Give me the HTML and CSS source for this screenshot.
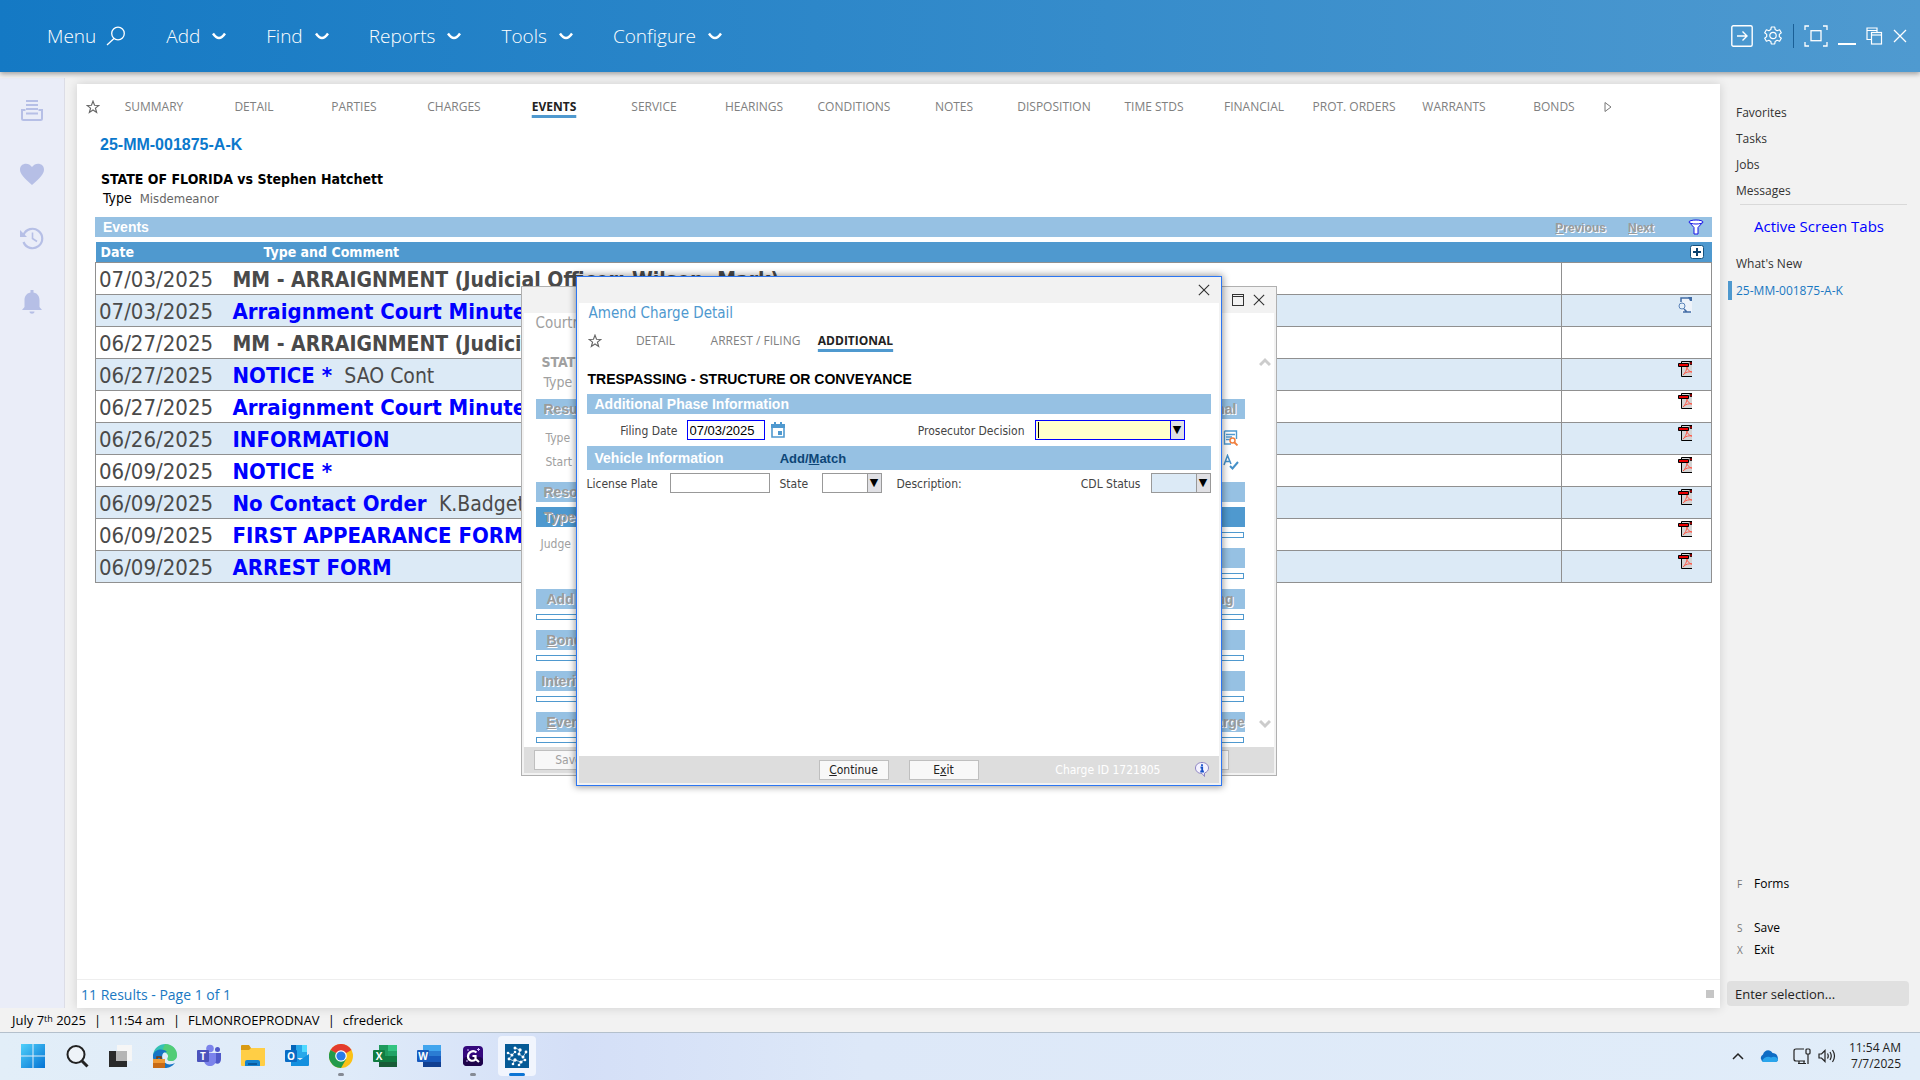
FILE: index.html
```html
<!DOCTYPE html>
<html lang="en">
<head>
    <meta charset="UTF-8">
    <meta name="viewport" content="width=device-width, initial-scale=1.0">
    <title>25-MM-001875-A-K</title>
    <link rel="stylesheet" href="styles.css">
</head>
<body>
    <!-- shared icons -->
    <svg class="defs" width="0" height="0">
        <symbol id="chevron" viewBox="0 0 14 9"><path d="M1 1.500q3 4.500 6 4.500t6-4.500" fill="none" stroke="currentColor" stroke-width="2.400"/></symbol>
        <symbol id="star" viewBox="0 0 12 12"><path d="M6 1l1.300 3.500 3.700.2-2.900 2.300 1 3.700L6 8.600l-3.100 2.100 1-3.700L1 4.700l3.700-.2z" fill="none" stroke="#666" stroke-width="1"/></symbol>
        <symbol id="close" viewBox="0 0 14 14"><path d="M1 1l12 12M13 1L1 13" fill="none" stroke="currentColor" stroke-width="1.3"/></symbol>
        <symbol id="pdf" viewBox="0 0 14 16">
            <path d="M3.500 15.500V.5H12l2 2v13z" fill="#d4d4d4"/>
            <path d="M14 15.500H3.500V.5H14" fill="none" stroke="#000"/>
            <path d="M12 1h2v2.500h-2z" fill="#e00" stroke="#000" stroke-width=".7"/>
            <path d="M5 14c2-1.500 4-5.500 4-8.500 0 3 2 5 5 5.500-3-.6-6 .2-8 2" fill="none" stroke="#ff5a4a"/>
            <path d="M.5 2.500h10v3H.5z" fill="#e80000" stroke="#000"/>
        </symbol>
        <symbol id="doc" viewBox="0 0 14 16">
            <path d="M3.500 15.500V.7H11l3 3v11.800z" fill="#eef3fa"/>
            <path d="M3 5V1h8M5 15h8M6 12l3 3" fill="none" stroke="#426ca5" stroke-width="1.500"/>
            <path d="M10 0h4v4h-2z" fill="#426ca5"/>
            <circle cx="4" cy="9" r="3" fill="#e6f0fa" stroke="#5b83b8"/>
        </symbol>
    </svg>

    <header class="topbar">
        <nav>
            <button class="menu-search">Menu
                <svg width="20" height="20" viewBox="0 0 20 20"><circle cx="12" cy="7.500" r="6.300" fill="none" stroke="#fff" stroke-width="1.300"/><path d="M8 12.500L1 19" stroke="#fff" stroke-width="1.300"/></svg>
            </button>
            <button>Add <svg width="14" height="9"><use href="#chevron"/></svg></button>
            <button>Find <svg width="14" height="9"><use href="#chevron"/></svg></button>
            <button>Reports <svg width="14" height="9"><use href="#chevron"/></svg></button>
            <button>Tools <svg width="14" height="9"><use href="#chevron"/></svg></button>
            <button>Configure <svg width="14" height="9"><use href="#chevron"/></svg></button>
        </nav>
        <div class="window-icons">
            <button aria-label="Open"><svg width="22" height="22" viewBox="0 0 22 22" fill="none" stroke="#fff" stroke-width="1.400"><rect x=".8" y=".8" width="20.400" height="20.400" rx="1.500"/><path d="M6 11h9.500M11.500 6.500L16 11l-4.500 4.500"/></svg></button>
            <button aria-label="Settings"><svg width="20" height="20" viewBox="0 0 20 20" fill="none" stroke="#fff" stroke-width="1.200"><path d="M8.300 1h3.400l.5 2.600 1.900 1.100 2.500-.9 1.700 2.900-2 1.700v2.200l2 1.700-1.700 2.900-2.500-.9-1.900 1.100-.5 2.600H8.300l-.5-2.600-1.900-1.100-2.500.9-1.700-2.900 2-1.700V8.400l-2-1.700 1.700-2.900 2.500.9 1.900-1.100z" stroke-linejoin="round"/><circle cx="10" cy="9.500" r="3.200"/></svg></button>
            <span class="divider"></span>
            <button aria-label="Full screen"><svg width="24" height="22" viewBox="0 0 24 22" fill="none" stroke="#fff" stroke-width="1.300"><path d="M1 5V1h4M19 1h4v4M23 17v4h-4M5 21H1v-4"/><rect x="7" y="5.700" width="10" height="10"/></svg></button>
            <button aria-label="Minimize"><svg width="18" height="18" viewBox="0 0 18 18"><path d="M0 17h18" stroke="#fff" stroke-width="2"/></svg></button>
            <button aria-label="Restore"><svg width="17" height="18" viewBox="0 0 17 18" fill="none" stroke="#fff" stroke-width="1.200"><path d="M5 12.500H1V1h10v4M1 3.500h10"/><rect x="5.500" y="5.500" width="10" height="11.500"/><path d="M5.500 8h10"/></svg></button>
            <button aria-label="Close"><svg width="14" height="14"><use href="#close"/></svg></button>
        </div>
    </header>

    <div class="workspace">
        <aside class="rail">
            <button aria-label="Print"><svg width="24" height="24" viewBox="0 0 24 24" fill="none" stroke="#b6bfe6" stroke-width="2"><path d="M6 3h12M6 7h12M6 11h12M6 15.500h12"/><path d="M5.500 12H2v8.500q0 1.500 1.500 1.500h17q1.500 0 1.500-1.500V12h-3.500"/></svg></button>
            <button aria-label="Favorites"><svg width="24" height="24" viewBox="0 0 24 24"><path d="M12 23C4 16 0 12 0 7.500 0 1 8.500-.5 12 5c3.500-5.500 12-4 12 2.500C24 12 20 16 12 23z" fill="#b6bfe6"/></svg></button>
            <button aria-label="History"><svg width="24" height="24" viewBox="0 0 24 24" fill="none" stroke="#b6bfe6" stroke-width="2.200"><path d="M3.500 9a9.700 9.700 0 1 1 0 7"/><path d="M12.500 6.500v6l4.500 3" stroke-width="1.600"/><path d="M0 4v7h7z" fill="#b6bfe6" stroke="none"/></svg></button>
            <button aria-label="Alerts"><svg width="24" height="24" viewBox="0 0 24 24" fill="#b6bfe6"><path d="M10.500 0h3v2.500c4.500 1 6 4 6 8V17l2.500 3H2l2.500-3v-6.500c0-4 1.500-7 6-8z"/><path d="M9.500 21.500h5c0 3-5 3-5 0z"/></svg></button>
        </aside>

        <main class="panel">
            <nav class="tabs">
                <svg class="star" width="14" height="14"><use href="#star"/></svg>
                <a href="#">SUMMARY</a>
                <a href="#">DETAIL</a>
                <a href="#">PARTIES</a>
                <a href="#">CHARGES</a>
                <a href="#" class="active">EVENTS</a>
                <a href="#">SERVICE</a>
                <a href="#">HEARINGS</a>
                <a href="#">CONDITIONS</a>
                <a href="#">NOTES</a>
                <a href="#">DISPOSITION</a>
                <a href="#">TIME STDS</a>
                <a href="#">FINANCIAL</a>
                <a href="#">PROT. ORDERS</a>
                <a href="#">WARRANTS</a>
                <a href="#">BONDS</a>
                <svg width="8" height="12" viewBox="0 0 8 12"><path d="M1 1.500v9L7 6z" fill="none" stroke="#777"/></svg>
            </nav>

            <section class="case">
                <h1>25-MM-001875-A-K</h1>
                <h2>STATE OF FLORIDA vs Stephen Hatchett</h2>
                <p>Type <span>Misdemeanor</span></p>
            </section>

            <section class="events">
                <div class="bar">
                    <h3>Events</h3>
                    <button class="emboss pager" disabled><u>P</u>revious</button>
                    <button class="emboss pager" disabled><u>N</u>ext</button>
                    <svg width="16" height="16" viewBox="0 0 16 16" fill="#fff" stroke="#1414e6"><path d="M1 3l5 5.500V15h4V8.500L15 3z"/><ellipse cx="8" cy="3" rx="7" ry="2"/></svg>
                </div>
                <table>
                    <thead>
                        <tr>
                            <th class="date">Date</th>
                            <th class="type">Type and Comment</th>
                            <th class="file"><svg width="14" height="14" viewBox="0 0 14 14"><rect x=".5" y=".5" width="13" height="13" rx="2" fill="#fff" stroke="#15527f"/><path d="M7 3v8M3 7h8" stroke="#0b416e" stroke-width="2"/></svg></th>
                        </tr>
                    </thead>
                    <tbody>
                        <tr><td>07/03/2025</td><td><b>MM - ARRAIGNMENT (Judicial Officer: Wilson, Mark)</b></td><td></td></tr>
                        <tr><td>07/03/2025</td><td><a href="#">Arraignment Court Minutes</a></td><td><svg width="14" height="16"><use href="#doc"/></svg></td></tr>
                        <tr><td>06/27/2025</td><td><b>MM - ARRAIGNMENT (Judicial Officer: Wilson, Mark)</b></td><td></td></tr>
                        <tr><td>06/27/2025</td><td><a href="#">NOTICE *</a> <span>SAO Cont</span></td><td><svg width="14" height="16"><use href="#pdf"/></svg></td></tr>
                        <tr><td>06/27/2025</td><td><a href="#">Arraignment Court Minutes</a></td><td><svg width="14" height="16"><use href="#pdf"/></svg></td></tr>
                        <tr><td>06/26/2025</td><td><a href="#">INFORMATION</a></td><td><svg width="14" height="16"><use href="#pdf"/></svg></td></tr>
                        <tr><td>06/09/2025</td><td><a href="#">NOTICE *</a></td><td><svg width="14" height="16"><use href="#pdf"/></svg></td></tr>
                        <tr><td>06/09/2025</td><td><a href="#">No Contact Order</a> <span>K.Badgett</span></td><td><svg width="14" height="16"><use href="#pdf"/></svg></td></tr>
                        <tr><td>06/09/2025</td><td><a href="#">FIRST APPEARANCE FORM</a></td><td><svg width="14" height="16"><use href="#pdf"/></svg></td></tr>
                        <tr><td>06/09/2025</td><td><a href="#">ARREST FORM</a></td><td><svg width="14" height="16"><use href="#pdf"/></svg></td></tr>
                    </tbody>
                </table>
            </section>

            <footer class="results">
                <span>11 Results - Page 1 of 1</span>
                <i></i>
            </footer>

            <!-- court session window, disabled while the charge window is open -->
            <div class="window back">
                <div class="titlebar">
                    <svg width="12" height="12" viewBox="0 0 12 12" fill="none" stroke="#333"><rect x=".5" y=".5" width="11" height="11"/><path d="M0 2.500h12"/></svg>
                    <svg width="12" height="12"><use href="#close"/></svg>
                </div>
                <div class="back-body">
                    <div class="back-form">
                        <p class="back-title">Courtroom</p>
                        <p class="back-party"><b>STATE</b></p>
                        <p class="back-type">Type</p>
                        <div class="bar"><span class="emboss">Result</span><span class="emboss">Additional</span></div>
                        <div class="back-fields">
                            <div class="field"><span>Type</span><svg width="16" height="16" viewBox="0 0 16 16" fill="none"><path d="M1.500 1h12v8M1.500 1v13H8M3 4.500h9M3 7h6M3 9.500h4" stroke="#4f99cf" stroke-width="1.400"/><circle cx="9.500" cy="10.500" r="2.500" stroke="#f08040" stroke-width="1.500"/><path d="M11.500 12.500l3 3" stroke="#f08040" stroke-width="1.800"/></svg></div>
                            <div class="field"><span>Start</span><svg width="16" height="16" viewBox="0 0 16 16" fill="none" stroke="#4590c8" stroke-width="1.500"><path d="M1 11L4.500 1.500 8 10M2.500 7.500h4.500"/><path d="M7 12l2.500 2.500L15 8" stroke-width="2"/></svg></div>
                        </div>
                        <div class="bar"><span class="emboss">Resources</span></div>
                        <div class="bar dark"><span class="emboss">Type</span></div>
                        <div class="judge">
                            <p>Judge</p>
                            <div class="judge-lists">
                                <div class="slot"></div>
                                <div class="bar"></div>
                                <div class="slot"></div>
                            </div>
                        </div>
                        <div class="bar group"><span class="emboss">Add</span><span class="emboss">Hearing</span></div>
                        <div class="slot"></div>
                        <div class="bar group"><span class="emboss"><u>B</u>onds</span></div>
                        <div class="slot"></div>
                        <div class="bar group tight"><span class="emboss">Interim</span></div>
                        <div class="slot"></div>
                        <div class="bar group clip"><span class="emboss"><u>E</u>vents</span><span class="emboss">Char<u>g</u>es</span></div>
                        <div class="slot"></div>
                    </div>
                    <div class="scroll">
                        <svg width="12" height="10" viewBox="0 0 12 10"><path d="M1 8l5-5 5 5" fill="none" stroke="#ccc" stroke-width="3"/></svg>
                        <svg width="12" height="10" viewBox="0 0 12 10"><path d="M1 2l5 5 5-5" fill="none" stroke="#ccc" stroke-width="3"/></svg>
                    </div>
                </div>
                <div class="buttons">
                    <button disabled>Save</button>
                    <button disabled>Exit</button>
                </div>
            </div>

            <div class="window front" role="dialog" aria-label="Amend Charge Detail">
                <div class="titlebar">
                    <button aria-label="Close"><svg width="12" height="12"><use href="#close"/></svg></button>
                </div>
                <div class="front-body">
                    <h4>Amend Charge Detail</h4>
                    <nav class="tabs">
                        <svg class="star" width="14" height="14"><use href="#star"/></svg>
                        <a href="#">DETAIL</a>
                        <a href="#">ARREST / FILING</a>
                        <a href="#" class="active">ADDITIONAL</a>
                    </nav>
                    <h5>TRESPASSING - STRUCTURE OR CONVEYANCE</h5>
                    <div class="bar"><h3>Additional Phase Information</h3></div>
                    <div class="form-row phase">
                        <label class="filing" for="filing">Filing Date</label>
                        <input id="filing" class="filing-date" type="text" value="07/03/2025">
                        <svg width="14" height="16" viewBox="0 0 14 16"><path d="M1 3h12v12H1z" fill="none" stroke="#4f99cf" stroke-width="1.600"/><path d="M0 2h14v4H0zM3 0h2v3H3zM9 0h2v3H9zM7 9h4v4H7z" fill="#4f99cf"/></svg>
                        <label class="push" for="decision">Prosecutor Decision</label>
                        <div class="combo focus"><i class="caret"></i><select id="decision"><option></option></select><span>▼</span></div>
                    </div>
                    <div class="bar tall"><h3>Vehicle Information</h3><a href="#">Add/<u>M</u>atch</a></div>
                    <div class="form-row">
                        <label class="plate" for="plate">License Plate</label>
                        <input id="plate" class="plate-no" type="text">
                        <label class="state" for="state">State</label>
                        <div class="combo small"><select id="state"><option></option></select><span>▼</span></div>
                        <span class="desc">Description:</span>
                        <label class="push" for="cdl">CDL Status</label>
                        <div class="combo small shaded"><select id="cdl"><option></option></select><span>▼</span></div>
                    </div>
                </div>
                <div class="buttons">
                    <button><u>C</u>ontinue</button>
                    <button>E<u>x</u>it</button>
                    <span>Charge ID 1721805</span>
                    <svg width="14" height="15" viewBox="0 0 14 15"><path d="M7 .5C3 .5.500 3 .500 6S3 11.500 7 11.500l2.500 3V11c2.500-1 4-2.500 4-5C13.500 3 11 .5 7 .5z" fill="#f4f2ff" stroke="#8d85c4"/><path d="M7 2.300v1.800M5.500 5.500H7.200V9.500M5.300 9.500h3.600" stroke="#1550c8" stroke-width="1.800" fill="none"/></svg>
                </div>
            </div>
        </main>

        <aside class="side">
            <a href="#">Favorites</a>
            <a href="#">Tasks</a>
            <a href="#">Jobs</a>
            <a href="#">Messages</a>
            <h6>Active Screen Tabs</h6>
            <a href="#">What's New</a>
            <a href="#" class="current">25-MM-001875-A-K</a>
            <div class="actions">
                <button class="forms"><kbd>F</kbd>Forms</button>
                <button><kbd>S</kbd>Save</button>
                <button><kbd>X</kbd>Exit</button>
            </div>
            <input type="text" placeholder="Enter selection..." aria-label="Selection">
        </aside>
    </div>

    <div class="status">
        <span>July 7<small>th</small> 2025</span><i>|</i><span>11:54 am</span><i>|</i><span>FLMONROEPRODNAV</span><i>|</i><span>cfrederick</span>
    </div>

    <footer class="taskbar">
        <div class="apps">
            <button aria-label="Start"><svg viewBox="0 0 24 24"><defs><linearGradient id="win" x2="1" y2="1"><stop stop-color="#4fd0fa"/><stop offset="1" stop-color="#0573d4"/></linearGradient></defs><path d="M0 0h11.500v11.500H0zM12.500 0H24v11.500H12.500zM0 12.500h11.500V24H0zM12.500 12.500H24V24H12.500z" fill="url(#win)"/></svg></button>
            <button aria-label="Search"><svg viewBox="0 0 24 24" fill="none" stroke="#222"><circle cx="11" cy="10.500" r="8.500" fill="#eef3f8" stroke-width="2"/><path d="M17 17l5.500 5.500" stroke-width="3"/></svg></button>
            <button aria-label="Task view"><svg viewBox="0 0 24 24"><path d="M8 1h15v16H8z" fill="#f6f6f6"/><path d="M0 7h18v16H0z" fill="#2a2a2a"/><path d="M7 7h11v10H7z" fill="#b5b5b5"/></svg></button>
            <button aria-label="Edge"><svg viewBox="0 0 24 24"><path d="M0 11C1 4 6 0 12.500 0 19 0 24 5 24 11c0 4-3 6-6 6-4 0-4-2-3-4 1-4-5-6-8-4-3 1-6 2-7 2z" fill="#35c1b4"/><path d="M12 0c7 0 12 5 12 11 0 4-3 6-6 6-4 0-4-2-3-4 .5-4-3-6-6-6z" fill="#66d64f" opacity=".6"/><path d="M0 11c2-6 10-7 14-3-6-1-7 8 0 12 3 1 6 0 8-1-3 4-7 5-10 5C5 24-1 18 0 11z" fill="#1674c4"/><path d="M0 15h12v9H0z" fill="#c76a15"/><path d="M0 15h12v4H0z" fill="#f09a33"/><path d="M4 15v-2h4v2" stroke="#7c3a09" stroke-width="1.500" fill="none"/></svg></button>
            <button aria-label="Teams"><svg viewBox="0 0 24 24"><circle cx="13" cy="4.500" r="3.800" fill="#7b83eb"/><circle cx="20.500" cy="5.500" r="2.500" fill="#5059c9"/><path d="M17 9h7v6c0 4-3 6-6 4z" fill="#5059c9"/><path d="M7 9h12v7c0 8-12 8-12 0z" fill="#7b83eb"/><rect y="6" width="12" height="12" rx="1" fill="#4b53bc"/><text x="6" y="16" class="glyph">T</text></svg></button>
            <button aria-label="File Explorer"><svg viewBox="0 0 24 24"><path d="M0 2q0-1 1-1h7l2 3h13q1 0 1 1v5H0z" fill="#d99a12"/><path d="M0 6h8l2-2h14v17q0 1-1 1H1q-1 0-1-1z" fill="#ffce45"/><path d="M4 22v-4q0-2 2-2h11q2 0 2 2v4z" fill="#1583cf"/><path d="M7 19h9v2H7z" fill="#0a5a9c"/></svg></button>
            <button aria-label="Outlook"><svg viewBox="0 0 24 24"><path d="M6 1h16v13H6z" fill="#28a8ea"/><path d="M6 1h5v7H6z" fill="#0364b8"/><path d="M17 1h5v7h-5z" fill="#50d9ff"/><path d="M6 22V10l9 6 9-6v11q0 1-1 1z" fill="#1490df"/><rect y="6" width="12" height="12" rx="1" fill="#0a6cc4"/><text x="6" y="16" class="glyph">O</text></svg></button>
            <button aria-label="Chrome" class="open"><svg viewBox="0 0 24 24"><circle cx="12" cy="12" r="12" fill="#fbc116"/><path d="M12 12L1.600 6a12 12 0 0 1 20.800 0z" fill="#e33b2e"/><path d="M12 12L1.600 6A12 12 0 0 0 12 24l5.200-9z" fill="#229a4b"/><circle cx="12" cy="12" r="5.800" fill="#fff"/><circle cx="12" cy="12" r="4.600" fill="#2a7be8"/></svg></button>
            <button aria-label="Excel"><svg viewBox="0 0 24 24"><path d="M6 1h9v22H6z" fill="#1f9a5d"/><path d="M15 1h9v6h-9z" fill="#33c481"/><path d="M15 7h9v6h-9z" fill="#21a366"/><path d="M6 12h9v6H6zM15 12h9v6h-9z" fill="#107c41"/><path d="M6 18h18v5H6z" fill="#185c37"/><rect y="6" width="12" height="12" rx="1" fill="#107c41"/><text x="6" y="16" class="glyph">X</text></svg></button>
            <button aria-label="Word"><svg viewBox="0 0 24 24"><path d="M6 1h18v6H6z" fill="#41a5ee"/><path d="M6 7h18v5H6z" fill="#2b7cd3"/><path d="M6 12h18v6H6z" fill="#185abd"/><path d="M6 18h18v5H6z" fill="#103f91"/><rect y="6" width="12" height="12" rx="1" fill="#185abd"/><text x="6" y="16" class="glyph">W</text></svg></button>
            <button aria-label="Greenshot" class="open"><svg viewBox="0 0 24 24"><rect x="2" y="2" width="20" height="20" rx="4" fill="#34087c"/><rect x="2" y="13" width="20" height="9" rx="4" fill="#1d0349"/><path d="M15.500 8.500C12 5.500 7 8 7 12.500c0 4 4.500 5.500 7.500 3V12H11.500M14.500 15l3.500 3" fill="none" stroke="#fff" stroke-width="2.200"/><path d="M6 6h2M5 17h2M16 5.500h3M17.500 4v3" stroke="#d5b8ff"/></svg></button>
            <button aria-label="Case manager" class="running"><svg viewBox="0 0 24 24"><path d="M0 0h24v24H0z" fill="#055a96"/><path d="M10 4l5 2-1 4 4 3 3-5M20 15l-4 3-6-2M14 21l2-3M3 9l4 2 3-3M7 11l-3 4 5 2-1 4" fill="none" stroke="#fff" stroke-width=".7"/><g fill="#fff"><circle cx="10" cy="4" r="1.500"/><circle cx="15" cy="6" r="1.700"/><circle cx="14" cy="10" r="1.500"/><circle cx="18" cy="13" r="1.500"/><circle cx="21" cy="8" r="1.400"/><circle cx="20" cy="16" r="1.300"/><circle cx="16" cy="18" r="1.600"/><circle cx="14" cy="21" r="1.300"/><circle cx="10" cy="16" r="1.700"/><circle cx="8" cy="20" r="1.300"/><circle cx="4" cy="15" r="1.400"/><circle cx="7" cy="11" r="1.500"/><circle cx="3" cy="9" r="1.300"/><circle cx="10" cy="8" r="1.300"/></g></svg></button>
        </div>
        <div class="tray">
            <svg width="12" height="8" viewBox="0 0 12 8"><path d="M1 7l5-5 5 5" fill="none" stroke="#222" stroke-width="1.500"/></svg>
            <svg class="cloud" width="18" height="12" viewBox="0 0 18 12"><path d="M4 12a4 4 0 0 1-1-7.500C4 0 10-1.500 12.500 3 17 3 18 7 18 9c0 2-1 3-3 3z" fill="#0f6cc4"/><path d="M2 11.500c1-4 6-6 9-4 3-2 7 0 7 2 0 1.500-1 2.500-3 2.500H4z" fill="#2aa5ec"/></svg>
            <svg width="18" height="18" viewBox="0 0 18 18" fill="none" stroke="#222" stroke-width="1.200"><path d="M11 2H3q-2 0-2 2v8q0 2 2 2h9M5 16.500h8M6 14v2M11 14v2"/><rect x="13" y="2" width="4" height="5" rx="1"/><path d="M15 7v10"/></svg>
            <svg width="18" height="18" viewBox="0 0 18 18" fill="none" stroke="#222" stroke-width="1.200"><path d="M1 7h2.500L7 3.500v11L3.500 11H1zM9.500 6.500q1.500 2.500 0 5M12 5q2.500 4 0 8M14.500 3q4 6 0 12"/></svg>
            <div class="clock">11:54 AM<br>7/7/2025</div>
        </div>
    </footer>
</body>
</html>
```

FILE: styles.css
```css
* {
    box-sizing: border-box;
}

body {
    margin: 0;
    min-height: 100vh;
    display: flex;
    flex-direction: column;
    background-color: #f2f2f2;
    font-family: "Open Sans", "Noto Sans", sans-serif;
    font-size: 12px;
    color: #222;
}

h1, h2, h3, h4, h5, h6, p {
    margin: 0;
}

button {
    font-family: inherit;
    background: none;
    border: none;
    padding: 0;
    color: inherit;
}

a {
    color: inherit;
    text-decoration: none;
}

svg {
    display: block;
    flex: none;
}

.defs {
    position: absolute;
}

/* top bar */
.topbar {
    height: 72px;
    padding: 0 13px 0 47px;
    display: flex;
    justify-content: space-between;
    align-items: center;
    background: linear-gradient(to right, #1479c4, #4f9ad0);
    color: #fff;
    box-shadow: 0 2px 5px rgba(0, 0, 0, 0.35);
    z-index: 1;
}

.topbar nav {
    display: flex;
    gap: 40px;
}

.topbar nav button {
    display: flex;
    align-items: center;
    gap: 12px;
    font-size: 19px;
    font-weight: 300;
}

.topbar nav button:first-child {
    gap: 10px;
}

.window-icons {
    display: flex;
    align-items: center;
    gap: 10px;
}

.window-icons .divider {
    width: 1px;
    height: 24px;
    background-color: #1a5f96;
}

/* work area */
.workspace {
    flex: 1;
    display: flex;
}

.rail {
    width: 65px;
    margin-top: 6px;
    padding-top: 20px;
    display: flex;
    flex-direction: column;
    align-items: center;
    gap: 40px;
    background-color: #eaedf8;
    border-right: 1px solid #dcdde6;
}

.panel {
    position: relative;
    flex: 1;
    min-width: 0;
    margin: 12px 0 0 12px;
    display: flex;
    flex-direction: column;
    background-color: #fff;
    box-shadow: 0 0 10px rgba(0, 0, 0, 0.15);
}

.tabs {
    display: flex;
    align-items: center;
    height: 46px;
    padding-left: 9px;
    color: #808080;
}

.tabs .star {
    margin-right: 4px;
}

.tabs a {
    width: 100px;
    text-align: center;
    line-height: 18px;
    white-space: nowrap;
}

.tabs .active {
    color: #222;
    font-weight: bold;
    text-decoration: underline 3px #4f99cf;
    text-underline-offset: 4px;
}

.case {
    padding: 5px 0 0 23px;
    font-family: "DejaVu Sans Condensed", sans-serif;
}

.case h1 {
    font-family: "Liberation Sans", Arial, sans-serif;
    font-size: 16px;
    line-height: 20px;
    color: #0b78cc;
}

.case h2 {
    margin-top: 14px;
    padding-left: 1px;
    font-size: 14px;
    line-height: 20px;
    color: #000;
}

.case p {
    padding-left: 3px;
    font-size: 14px;
    line-height: 18px;
    color: #000;
}

.case p span {
    margin-left: 4px;
    font-size: 13px;
    color: #666;
}

.events {
    padding: 9px 8px 0 18px;
}

.bar {
    display: flex;
    align-items: center;
    height: 20px;
    background-color: #96c1e3;
    color: #fff;
    font-family: "Liberation Sans", Arial, sans-serif;
    font-size: 14px;
    font-weight: bold;
}

.bar h3 {
    padding-left: 8px;
    font-size: 14px;
}

.events .bar {
    gap: 22px;
    padding-right: 8px;
    margin-bottom: 5px;
}

.events .bar h3 {
    flex: 1;
}

.emboss {
    color: #9b9b9b;
    text-shadow: 1px 1px 0 #fff;
    font-weight: bold;
}

.pager {
    padding-top: 2px;
    font-size: 12px;
}

.events .bar svg {
    margin-left: 12px;
}

.events table svg {
    margin-left: auto;
}

.events table {
    width: 100%;
    table-layout: fixed;
    border-collapse: collapse;
    font-family: "DejaVu Sans Condensed", sans-serif;
}

.events th {
    height: 20px;
    padding: 1px 5px 0;
    background-color: #4f99cf;
    color: #fff;
    font-size: 14px;
    line-height: 18px;
    text-align: left;
}

.events .date {
    width: 137px;
}

.events .type {
    padding-left: 31px;
}

.events .file {
    width: 150px;
    padding-right: 8px;
}

.events tbody tr {
    height: 32px;
    border: 1px solid #909090;
}

.events tbody tr:nth-child(even) {
    background-color: #dceaf6;
}

.events td {
    padding: 3px 0 0 3px;
    font-size: 22px;
    line-height: 28px;
    color: #4a4a4a;
    white-space: nowrap;
}

.events td + td {
    padding-left: 0;
}

.events td:last-child {
    padding: 2px 19px 0 0;
    vertical-align: top;
    border-left: 1px solid #909090;
}

.events td b {
    font-size: 21px;
}

.events td a {
    color: #0000ff;
    font-weight: bold;
}

.events td span {
    margin-left: 6px;
    font-size: 21px;
}

.results {
    margin-top: auto;
    height: 29px;
    padding: 0 6px 0 4px;
    display: flex;
    align-items: center;
    justify-content: space-between;
    border-top: 1px solid #eee;
    font-size: 14px;
    color: #1a78c2;
}

.results i {
    width: 8px;
    height: 8px;
    background-color: #c6c6c6;
}

/* windows over the panel */
.window {
    position: absolute;
    left: 0;
    right: 0;
    margin: 0 auto;
    display: flex;
    flex-direction: column;
    padding: 0 2px 2px;
    background-color: #f2f2f2;
    font-family: "DejaVu Sans Condensed", sans-serif;
}

.back {
    top: 202px;
    width: 756px;
    height: 490px;
    border: 1px solid #b0b0b0;
    color: #a0a0a0;
}

.front {
    top: 192px;
    width: 646px;
    height: 510px;
    border: 1px solid #2c76f2;
    box-shadow: 0 0 7px 1px rgba(0, 0, 0, 0.4);
}

.titlebar {
    height: 26px;
    padding: 0 9px;
    display: flex;
    justify-content: flex-end;
    align-items: center;
    gap: 9px;
    color: #333;
}

.back-body {
    flex: 1;
    display: flex;
    gap: 14px;
    padding: 0 3px 0 12px;
    background-color: #fff;
}

.back-form {
    flex: 1;
    min-width: 0;
    font-size: 12px;
}

.back-title {
    font-size: 15px;
    line-height: 20px;
}

.back-party {
    margin-top: 19px;
    padding-left: 6px;
    font-size: 14px;
    line-height: 20px;
}

.back-type {
    padding-left: 8px;
    font-size: 14px;
    line-height: 20px;
}

.back .bar {
    justify-content: space-between;
    padding: 0 8px;
}

.back-title + .back-party + .back-type + .bar {
    margin-top: 7px;
}

.back-fields {
    padding: 7px 6px 8px 10px;
}

.field {
    display: flex;
    justify-content: space-between;
    align-items: center;
    height: 24px;
}

.back .dark {
    margin-top: 5px;
    background-color: #4f99cf;
}

.judge {
    display: flex;
    height: 46px;
    margin-bottom: 16px;
    padding-left: 5px;
}

.judge p {
    flex: 1;
    line-height: 34px;
}

.judge-lists {
    width: 50%;
}

.judge-lists .bar {
    margin-top: 10px;
}

.back .group {
    padding: 0 11px;
}

.back .tight {
    padding: 0 6px;
}

.back .clip {
    padding-right: 0;
    overflow: hidden;
}

.clip .emboss:last-child {
    margin-right: -8px;
}

.slot {
    height: 6px;
    margin: 5px 1px 0 0;
    border: 1px solid #4f99cf;
}

.slot + .group {
    margin-top: 10px;
}

.scroll {
    display: flex;
    flex-direction: column;
    justify-content: space-between;
    padding: 44px 0 18px;
}

.window .buttons {
    display: flex;
    align-items: center;
    background-color: #ddd;
    color: #222;
}

.window .buttons button {
    width: 70px;
    height: 20px;
    background-color: #f8f8f8;
    border: 1px solid #bfbfbf;
    font-size: 12px;
}

.back .buttons {
    justify-content: space-between;
    height: 26px;
    padding: 0 45px 0 10px;
}

.back .buttons button {
    color: #a0a0a0;
}

.front .buttons {
    gap: 20px;
    height: 27px;
    padding: 0 10px 0 240px;
}

.front .buttons span {
    margin-left: auto;
    padding-right: 14px;
    color: #fff;
}

.front-body {
    flex: 1;
    padding: 0 8px;
    background-color: #fff;
}

.front-body h4 {
    padding-left: 2px;
    font-size: 15px;
    font-weight: normal;
    line-height: 20px;
    color: #4f99cf;
}

.front-body .tabs {
    height: 36px;
    padding-left: 1px;
    font-family: "Open Sans", "Noto Sans", sans-serif;
}

.front-body h5 {
    margin-top: 10px;
    padding: 0 1px 4px;
    font-family: "Liberation Sans", Arial, sans-serif;
    font-size: 14px;
    line-height: 21px;
    color: #000;
}

.bar a {
    margin-left: 56px;
    font-size: 13px;
    color: #0d4677;
}

.bar.tall {
    height: 24px;
}

.form-row {
    display: flex;
    align-items: center;
    height: 26px;
    color: #444;
}

.form-row label,
.form-row .desc {
    padding-top: 2px;
}

.form-row.phase {
    height: 32px;
    padding-right: 26px;
}

.form-row input {
    height: 20px;
    padding: 0 2px;
    border: 1px solid #999;
    background-color: #fff;
    font-family: "Liberation Sans", Arial, sans-serif;
    font-size: 13px;
    color: #000;
}

.form-row .filing {
    width: 91px;
    text-align: right;
    margin-right: 9px;
}

.form-row .filing-date {
    width: 78px;
    margin-right: 6px;
    border-color: #0000ff;
}

.form-row .plate {
    width: 83px;
}

.form-row .plate-no {
    width: 100px;
}

.form-row .state {
    width: 52px;
    padding-left: 10px;
}

.form-row .desc {
    margin-left: 15px;
}

.form-row .push {
    margin: 0 10px 0 auto;
}

.combo {
    display: flex;
    width: 150px;
    height: 20px;
    border: 1px solid #999;
    background-color: #fff;
}

.combo.small {
    width: 60px;
}

.combo.shaded {
    background-color: #dceaf6;
}

.combo.focus {
    border-color: #0000ff;
    background-color: #ffffcc;
}

.combo select {
    flex: 1;
    min-width: 0;
    appearance: none;
    border: none;
    background: none;
}

.combo span {
    width: 14px;
    border-left: 1px solid #999;
    background-color: #e0e0e4;
    color: #000;
    font-family: "DejaVu Sans", sans-serif;
    font-size: 11px;
    line-height: 18px;
    text-align: center;
}

.combo.focus span {
    border-color: #0000ff;
}

.combo .caret {
    width: 1px;
    margin: 1px 0 1px 2px;
    background-color: #000;
}

/* right side */
.side {
    width: 200px;
    padding: 28px 11px 2px 7px;
    display: flex;
    flex-direction: column;
}

.side > a {
    padding-left: 9px;
    line-height: 26px;
    color: #333;
}

.side h6 {
    margin: 0 2px 4px 13px;
    padding-left: 14px;
    border-top: 1px solid #d9d9d9;
    font-size: 15px;
    font-weight: normal;
    line-height: 42px;
    color: #0000ff;
}

.side .current {
    margin: 4px 0 0 1px;
    padding-left: 4px;
    border-left: 4px solid #4f99cf;
    line-height: 19px;
    color: #1a78c2;
}

.actions {
    margin-top: auto;
    display: flex;
    flex-direction: column;
    color: #000;
}

.actions button {
    padding-left: 10px;
    font-size: 12px;
    line-height: 22px;
    text-align: left;
}

.actions .forms {
    margin-bottom: 22px;
}

.actions kbd {
    display: inline-block;
    width: 17px;
    font-family: inherit;
    font-size: 10px;
    color: #777;
}

.side input {
    margin-top: 20px;
    height: 25px;
    padding: 0 8px;
    border: none;
    border-radius: 4px;
    background-color: #e0e0e0;
    font-family: inherit;
    font-size: 13px;
}

.side input::placeholder {
    color: #222;
}

/* bottom */
.status {
    height: 24px;
    padding-left: 12px;
    font-size: 13px;
    line-height: 21px;
    color: #000;
}

.status i {
    margin: 0 8px;
    font-style: normal;
}

.status small {
    font-size: 9px;
    vertical-align: 3px;
}

.taskbar {
    height: 48px;
    padding: 0 19px 2px 11px;
    display: flex;
    justify-content: space-between;
    align-items: center;
    border-top: 1px solid #b4c0cc;
    background: linear-gradient(to right, #e2eef8, #dfebf9 18%, #d4dff7 30%, #dde8f8 45%, #e1edf9);
}

.apps {
    display: flex;
}

.apps button {
    position: relative;
    width: 44px;
    height: 40px;
    display: flex;
    justify-content: center;
    align-items: center;
}

.apps svg {
    width: 24px;
    height: 24px;
}

.glyph {
    fill: #fff;
    font-family: "Open Sans", sans-serif;
    font-size: 10px;
    font-weight: bold;
    text-anchor: middle;
}

.apps .running {
    width: 38px;
    margin-left: 3px;
    border-radius: 4px;
    background-color: #f1f5fd;
}

.apps .open::after,
.apps .running::after {
    content: "";
    position: absolute;
    bottom: 0;
    width: 6px;
    height: 3px;
    border-radius: 2px;
    background-color: #858a94;
}

.apps .running::after {
    width: 16px;
    background-color: #0c74d4;
}

.tray {
    display: flex;
    align-items: center;
    gap: 7px;
}

.tray .cloud {
    margin: 0 8px 0 9px;
}

.clock {
    margin-left: 6px;
    font-size: 12px;
    line-height: 16px;
    text-align: right;
}
```
